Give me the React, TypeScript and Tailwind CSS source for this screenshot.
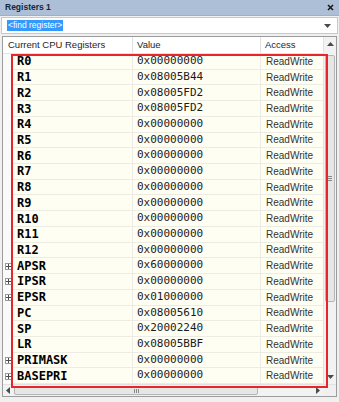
import React from "react";

type Reg = { name: string; value: string; group?: boolean };

const regs: Reg[] = [
  { name: "R0", value: "0x00000000" },
  { name: "R1", value: "0x08005B44" },
  { name: "R2", value: "0x08005FD2" },
  { name: "R3", value: "0x08005FD2" },
  { name: "R4", value: "0x00000000" },
  { name: "R5", value: "0x00000000" },
  { name: "R6", value: "0x00000000" },
  { name: "R7", value: "0x00000000" },
  { name: "R8", value: "0x00000000" },
  { name: "R9", value: "0x00000000" },
  { name: "R10", value: "0x00000000" },
  { name: "R11", value: "0x00000000" },
  { name: "R12", value: "0x00000000" },
  { name: "APSR", value: "0x60000000", group: true },
  { name: "IPSR", value: "0x00000000", group: true },
  { name: "EPSR", value: "0x01000000", group: true },
  { name: "PC", value: "0x08005610" },
  { name: "SP", value: "0x20002240" },
  { name: "LR", value: "0x08005BBF" },
  { name: "PRIMASK", value: "0x00000000", group: true },
  { name: "BASEPRI", value: "0x00000000", group: true },
];

function Arrow({ dir }: { dir: "up" | "down" | "left" | "right" }) {
  const pts = {
    up: "0,4 3.5,0 7,4",
    down: "0,0 3.5,4 7,0",
    left: "4,0 0,3.5 4,7",
    right: "0,0 4,3.5 0,7",
  }[dir];
  const w = dir === "up" || dir === "down" ? 7 : 4;
  const h = dir === "up" || dir === "down" ? 4 : 7;
  return (
    <svg width={w} height={h} viewBox={`0 0 ${w} ${h}`}>
      <polygon points={pts} fill="#4a4a4a" />
    </svg>
  );
}

function Expander() {
  return (
    <div className="w-[7px] h-[7px] border border-[#9a9a9a] bg-white flex items-center justify-center">
      <svg width="5" height="5" viewBox="0 0 5 5">
        <path d="M0 2.5H5M2.5 0V5" stroke="#4d4d4d" strokeWidth="1" />
      </svg>
    </div>
  );
}

export default function App() {
  return (
    <div className="w-[339px] h-[402px] bg-[#f0f0f0] flex flex-col relative overflow-hidden font-['Liberation_Sans',Arial,sans-serif]">
      {/* title bar */}
      <div className="h-[16px] shrink-0 bg-[#adbfd7] border-b border-[#9db0c9] flex items-center justify-between pl-[5px] pr-[5px]">
        <span className="text-[8.5px] font-bold text-[#15253a] leading-none">Registers 1</span>
        <svg width="7" height="7" viewBox="0 0 7 7">
          <path d="M1 1L6 6M6 1L1 6" stroke="#1a1a1a" strokeWidth="1.6" />
        </svg>
      </div>

      {/* find box */}
      <div className="mx-[1px] mt-[1px] h-[17px] shrink-0 bg-white border border-[#c8c8c8] flex items-center justify-between pl-[5px] pr-[6px]">
        <span className="bg-[#3399ff] text-white text-[8.5px] leading-[11px] px-[1px]">&lt;find register&gt;</span>
        <Arrow dir="down" />
      </div>

      {/* table */}
      <div className="mt-[2px] mx-[2px] h-[361px] shrink-0 border border-[#9c9c9c] bg-white flex flex-col">
        <div className="flex flex-1 min-h-0">
          <div className="flex-1 flex flex-col">
            <div className="h-[17px] shrink-0 flex text-[9.5px] text-[#1e1e1e] border-b border-[#e3e3e3]">
              <div className="w-[130px] pl-[5px] flex items-center border-r border-[#e0e0e0]">Current CPU Registers</div>
              <div className="w-[128px] pl-[4px] flex items-center border-r border-[#e0e0e0]">Value</div>
              <div className="flex-1 pl-[4px] flex items-center">Access</div>
            </div>
            {regs.map((r) => (
              <div key={r.name} className="h-[15.72px] shrink-0 flex">
                <div className="w-[10px] flex items-center justify-center bg-[#fafafa]">
                  {r.group && <Expander />}
                </div>
                <div className="w-[120px] pl-[4px] flex items-center bg-[#fefef3] border-b border-r border-[#ecece4] font-['DejaVu_Sans_Mono',monospace] font-bold text-[12px] text-black">
                  {r.name}
                </div>
                <div className="w-[128px] pl-[4px] flex items-center bg-[#fefef3] border-b border-r border-[#ecece4] font-['DejaVu_Sans_Mono',monospace] text-[11px] text-[#1a1a1a]">
                  {r.value}
                </div>
                <div className="flex-1 pl-[5px] flex items-center bg-[#fefef3] border-b border-[#ecece4] text-[10px] text-[#333]">
                  ReadWrite
                </div>
              </div>
            ))}
          </div>

          {/* vertical scrollbar */}
          <div className="w-[13px] shrink-0 bg-[#f2f2f2] border-l border-[#e2e2e2] flex flex-col items-center">
            <div className="h-[14px] flex items-center justify-center">
              <Arrow dir="up" />
            </div>
            <div className="mt-[4px] h-[247px] w-[10px] rounded-[2px] border border-[#b5b5b5] bg-[#e6e6e6] flex flex-col items-center justify-center gap-[1px]">
              <div className="w-[4px] h-px bg-[#888]" />
              <div className="w-[4px] h-px bg-[#888]" />
              <div className="w-[4px] h-px bg-[#888]" />
            </div>
            <div className="flex-1" />
            <div className="h-[14px] flex items-center justify-center">
              <Arrow dir="down" />
            </div>
          </div>
        </div>

        {/* horizontal scrollbar */}
        <div className="h-[12px] shrink-0 flex bg-[#f2f2f2] border-t border-[#e2e2e2]">
          <div className="w-[10px] flex items-center justify-center">
            <Arrow dir="left" />
          </div>
          <div className="ml-[1px] my-[1px] w-[244px] rounded-[2px] border border-[#b5b5b5] bg-[#e6e6e6] flex items-center justify-center gap-[1px]">
            <div className="w-px h-[4px] bg-[#888]" />
            <div className="w-px h-[4px] bg-[#888]" />
            <div className="w-px h-[4px] bg-[#888]" />
          </div>
          <div className="flex-1" />
          <div className="w-[10px] flex items-center justify-center">
            <Arrow dir="right" />
          </div>
          <div className="w-[13px] bg-[#f0f0f0]" />
        </div>
      </div>

      {/* red annotation frame */}
      <div className="absolute left-[11px] top-[54px] w-[317px] h-[334px] border-2 border-[#e8262a] pointer-events-none" />
    </div>
  );
}
